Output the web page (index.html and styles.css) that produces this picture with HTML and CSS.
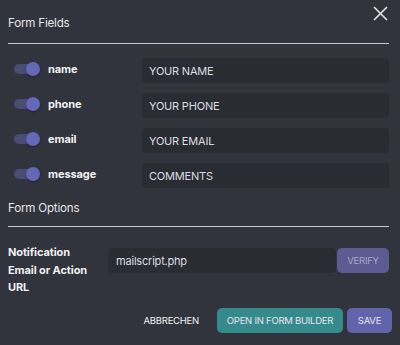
FILE: index.html
```html
<!DOCTYPE html>
<html lang="en">

<head>
    <meta charset="UTF-8" />
    <meta name="viewport" content="width=device-width, initial-scale=1.0" />
    <title>Form Fields</title>
    <link rel="stylesheet" href="styles.css">
</head>

<body>
    <div class="dialog">
        <div class="section-head first">
            <h2 class="section-title">Form Fields</h2>
            <button class="close" aria-label="Close">
                <svg width="15" height="15" viewBox="0 0 15 15">
                    <path d="M1 1 L14 14 M14 1 L1 14" stroke="#e4e4e8" stroke-width="1.6" fill="none" />
                </svg>
            </button>
        </div>

        <div class="fields">
            <div class="field-row">
                <span class="toggle"><span class="knob"></span></span>
                <span class="field-name">name</span>
                <input class="field-input" type="text" value="YOUR NAME" />
            </div>
            <div class="field-row">
                <span class="toggle"><span class="knob"></span></span>
                <span class="field-name">phone</span>
                <input class="field-input" type="text" value="YOUR PHONE" />
            </div>
            <div class="field-row">
                <span class="toggle"><span class="knob"></span></span>
                <span class="field-name">email</span>
                <input class="field-input" type="text" value="YOUR EMAIL" />
            </div>
            <div class="field-row">
                <span class="toggle"><span class="knob"></span></span>
                <span class="field-name">message</span>
                <input class="field-input" type="text" value="COMMENTS" />
            </div>
        </div>

        <div class="section-head">
            <h2 class="section-title">Form Options</h2>
        </div>

        <div class="option-row">
            <label class="option-label">Notification Email or Action URL</label>
            <input class="option-input" type="text" value="mailscript.php" />
            <button class="btn verify">VERIFY</button>
        </div>

        <div class="actions">
            <button class="btn plain">ABBRECHEN</button>
            <button class="btn teal">OPEN IN FORM BUILDER</button>
            <button class="btn purple">SAVE</button>
        </div>
    </div>
</body>

</html>
```

FILE: styles.css
```css
* {
    box-sizing: border-box;
    margin: 0;
    padding: 0;
}

body {
    font-family: Inter, 'Noto Sans', sans-serif;
    background: #31333d;
    color: #e2e2e6;
    width: 400px;
    height: 345px;
    overflow: hidden;
}

.dialog {
    padding: 0 11px 0 8px;
}

.section-head {
    display: flex;
    justify-content: space-between;
    align-items: center;
    height: 38px;
    border-bottom: 1.5px solid #c9c9ce;
}

.section-head.first {
    height: 44px;
    padding-top: 3px;
}

.section-title {
    font-size: 11.6px;
    font-weight: 400;
    color: #e6e6ea;
    letter-spacing: -0.2px;
}

.close {
    background: none;
    border: none;
    align-self: flex-start;
    margin-top: 3px;
    margin-right: 1px;
    line-height: 0;
    cursor: pointer;
}

.fields {
    display: flex;
    flex-direction: column;
    gap: 10px;
    padding-top: 14px;
    padding-bottom: 1px;
}

.field-row {
    display: flex;
    align-items: center;
    height: 25px;
}

.toggle {
    position: relative;
    width: 24px;
    height: 10px;
    margin-left: 6px;
    margin-top: -3px;
    border-radius: 5px;
    background: #4b4c74;
}

.knob {
    position: absolute;
    right: -2px;
    top: -2px;
    width: 14px;
    height: 14px;
    border-radius: 50%;
    background: #6567b7;
    box-shadow: 0 1px 2px rgba(0, 0, 0, 0.3);
}

.field-name {
    width: 94px;
    margin-left: 10px;
    margin-top: -3px;
    font-size: 11px;
    font-weight: 700;
    color: #f0f0f2;
    letter-spacing: -0.1px;
}

.field-input,
.option-input {
    flex: 1;
    height: 25px;
    border: none;
    border-radius: 4px;
    background: #2a2c33;
    color: #dcdce0;
    font-family: inherit;
    font-size: 11px;
    padding: 0 7px;
    letter-spacing: -0.2px;
    outline: none;
}

.option-row {
    display: flex;
    align-items: flex-start;
    padding-top: 17px;
}

.option-label {
    width: 100px;
    padding-right: 14px;
    font-size: 11px;
    font-weight: 700;
    line-height: 17.5px;
    color: #f0f0f2;
    letter-spacing: -0.1px;
}

.option-input {
    margin-top: 4px;
    margin-right: 1px;
    padding: 0 8px;
}

.btn {
    height: 25px;
    border: none;
    border-radius: 5px;
    font-family: inherit;
    font-size: 9.5px;
    color: #e6e6ee;
    letter-spacing: -0.25px;
    white-space: nowrap;
    cursor: pointer;
}

.verify {
    margin-top: 4px;
    width: 52px;
    background: #5c5b92;
    color: #a9a8cc;
}

.actions {
    display: flex;
    justify-content: flex-end;
    align-items: center;
    gap: 4px;
    margin-top: 11px;
    margin-right: -3px;
}

.plain {
    background: none;
    color: #f2f2f4;
    padding: 0 14px 0 0;
}

.teal {
    background: #358a8c;
    width: 126px;
}

.purple {
    background: #6163ab;
    width: 45px;
}
```
